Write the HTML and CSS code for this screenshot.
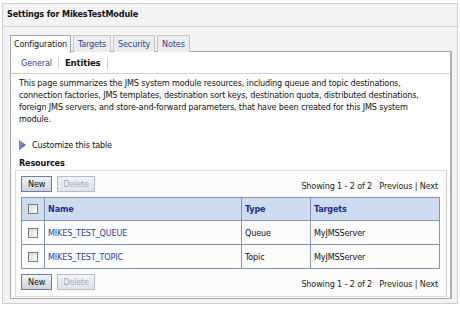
FILE: index.html
```html
<!DOCTYPE html>
<html>
<head>
<meta charset="utf-8">
<link rel="stylesheet" href="styles.css">
</head>
<body>
<div class="panel">
  <div class="panel-title">Settings for MikesTestModule</div>
  <div class="panel-body">
    <div class="tabs">
      <div class="tab active">Configuration</div>
      <div class="tab">Targets</div>
      <div class="tab">Security</div>
      <div class="tab">Notes</div>
    </div>
    <div class="content">
      <div class="subtabs">
        <span class="subtab link">General</span>
        <span class="subtab current">Entities</span>
      </div>
      <div class="inner">
        <p class="intro">This page summarizes the JMS system module resources, including queue and topic destinations, connection factories, JMS templates, destination sort keys, destination quota, distributed destinations, foreign JMS servers, and store-and-forward parameters, that have been created for this JMS system module.</p>
        <div class="customize">
          <svg class="tri" width="7" height="10" viewBox="0 0 7 10"><defs><linearGradient id="g" x1="0" y1="0" x2="1" y2="1"><stop offset="0" stop-color="#9db4e0"/><stop offset="1" stop-color="#2d4f9e"/></linearGradient></defs><path d="M0.5 0.5 L6.5 5 L0.5 9.5 Z" fill="url(#g)" stroke="#3b5998" stroke-width="0.6"/></svg>
          <span>Customize this table</span>
        </div>
        <div class="section-title">Resources</div>
        <div class="res-panel">
          <div class="toolbar">
            <div class="btns"><span class="btn">New</span><span class="btn disabled">Delete</span></div>
            <div class="paging">Showing 1 - 2 of 2 &nbsp; Previous | Next</div>
          </div>
          <table class="grid">
            <thead>
              <tr><th class="cb"><span class="check"></span></th><th class="c-name">Name</th><th class="c-type">Type</th><th>Targets</th></tr>
            </thead>
            <tbody>
              <tr><td class="cb"><span class="check"></span></td><td class="link">MIKES_TEST_QUEUE</td><td>Queue</td><td>MyJMSServer</td></tr>
              <tr><td class="cb"><span class="check"></span></td><td class="link">MIKES_TEST_TOPIC</td><td>Topic</td><td>MyJMSServer</td></tr>
            </tbody>
          </table>
          <div class="toolbar bottom">
            <div class="btns"><span class="btn">New</span><span class="btn disabled">Delete</span></div>
            <div class="paging">Showing 1 - 2 of 2 &nbsp; Previous | Next</div>
          </div>
        </div>
      </div>
    </div>
  </div>
</div>
</body>
</html>
```

FILE: styles.css
```css
html, body {
  margin: 0;
  padding: 0;
  background: #ffffff;
}
body {
  font-family: "DejaVu Sans Condensed", "DejaVu Sans", sans-serif;
  font-stretch: condensed;
  font-size: 9px;
  letter-spacing: -0.15px;
  color: #111111;
}
.panel {
  margin: 3px 2px 0 2px;
  border: 1px solid #d0d0d0;
  background: #f3f3f3;
  height: 301px;
  box-sizing: border-box;
}
.panel-title {
  height: 22px;
  line-height: 21px;
  padding-left: 4px;
  font-weight: bold;
  border-bottom: 1px solid #d2d2d2;
}
.panel-body {
  padding: 8px 5px 0 7px;
}
.tabs {
  display: flex;
  gap: 2px;
  height: 17px;
  position: relative;
  z-index: 1;
}
.tab {
  border: 1px solid #c4c4c4;
  border-bottom: none;
  background: #ececec;
  padding: 0 4px;
  line-height: 16px;
  height: 16px;
  color: #2b3f9a;
}
.tab.active {
  background: #ffffff;
  color: #111;
  border-color: #a8a8a8;
  height: 17px;
  padding: 0 3px;
}
.content {
  background: #ffffff;
  border: 1px solid #a8a8a8;
  border-right: 2px solid #b0b0b0;
  margin-top: -1px;
  height: 248px;
  box-sizing: border-box;
}
.subtabs {
  height: 21px;
  display: flex;
  align-items: center;
  border-bottom: 1px solid #d0d0d0;
  padding-left: 4px;
}
.subtab {
  padding: 0 6px;
  line-height: 12px;
  border-right: 1px solid #cfcfcf;
}
.subtab.current {
  font-weight: bold;
  font-size: 9.5px;
}
.link {
  color: #2b3f9a;
}
.inner {
  padding: 0 3px 0 8px;
}
.intro {
  margin: 3px 0 0 0;
  line-height: 12px;
  width: 420px;
}
.customize {
  margin-top: 14px;
  display: flex;
  align-items: center;
  gap: 6px;
  height: 12px;
}
.section-title {
  margin-top: 6px;
  font-weight: bold;
  line-height: 12px;
}
.res-panel {
  margin: 1px 0 0 -4px;
  border: 1px solid #dadada;
  border-right: 1px solid #cccccc;
  background: #fcfcfc;
  padding: 5px 7px 5px 5px;
  height: 127px;
  box-sizing: border-box;
}
.toolbar {
  display: flex;
  justify-content: space-between;
  align-items: flex-end;
  height: 16px;
}
.toolbar.bottom {
  margin-top: 5px;
}
.btns {
  display: flex;
  gap: 5px;
}
.btn {
  display: inline-block;
  height: 14px;
  line-height: 14px;
  padding: 0 6px;
  border: 1px solid #6f7f99;
  background: linear-gradient(#eef2f7, #c9d4e3);
  color: #111;
}
.btn.disabled {
  border-color: #b3bccb;
  color: #a3acba;
  background: linear-gradient(#f2f4f7, #dde3eb);
  padding: 0 5px;
}
.paging {
  line-height: 12px;
  color: #222;
  padding-right: 1px;
}
.grid {
  margin-top: 5px;
  width: 419px;
  border-collapse: collapse;
  border: 1px solid #8297b5;
}
.grid th, .grid td {
  border: 1px solid #8297b5;
  text-align: left;
  padding: 0 3px;
  height: 23px;
}
.grid th {
  height: 22px;
  background: #cddcf0;
  color: #1c2f8c;
  font-weight: bold;
}
.grid .cb {
  width: 22px;
  text-align: center;
  padding: 0;
}
.c-name { width: 190px; }
.c-type { width: 62px; }
.check {
  display: inline-block;
  width: 8px;
  height: 8px;
  border: 1px solid #7a7a7a;
  background: linear-gradient(135deg, #d8d8d8, #ffffff);
  vertical-align: middle;
}
```
